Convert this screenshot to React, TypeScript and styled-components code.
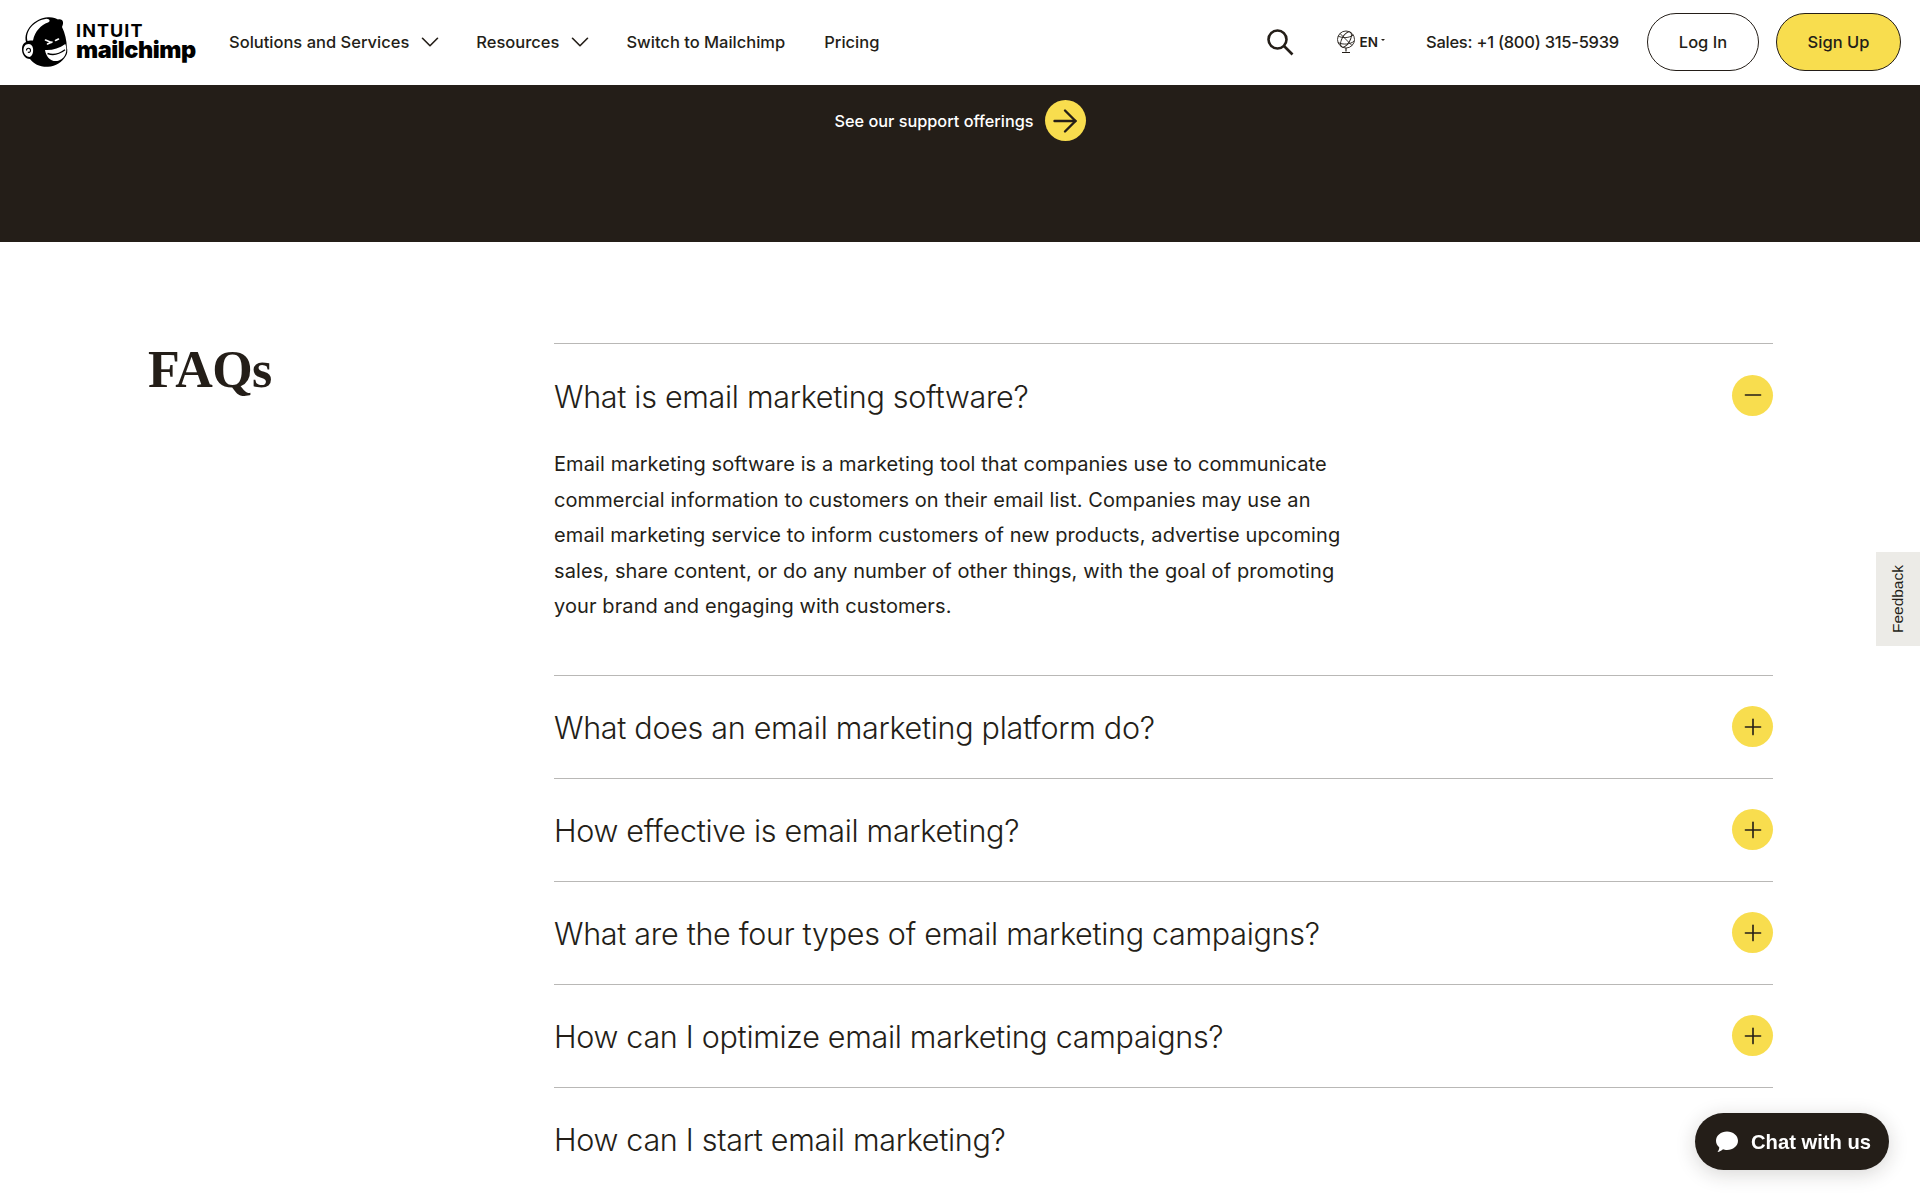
import React from 'react';
import styled, { createGlobalStyle } from 'styled-components';
import { ChevronDown, ArrowRight, Plus, Minus } from 'lucide-react';

const Global = createGlobalStyle`
  html, body { margin: 0; padding: 0; background: #fff; }
  body { font-family: Inter, "Liberation Sans", sans-serif; color: #241e18; overflow: hidden; }
  * { box-sizing: border-box; }
`;

const Page = styled.div`
  height: 1200px;
  overflow: hidden;
  position: relative;
`;

const Header = styled.header`
  height: 85px;
  display: flex;
  align-items: center;
  padding: 0 19px 2px 22px;
  background: #fff;
`;

const LogoLink = styled.a`
  display: flex;
  align-items: center;
  gap: 8px;
  width: 207px;
  flex: none;
`;

const Wordmark = styled.div`
  display: flex;
  flex-direction: column;
  color: #000;
`;

const IntuitMark = styled.span`
  font: 700 18px/16px Inter, sans-serif;
  letter-spacing: 1.1px;
`;

const MailchimpMark = styled.span`
  font: 900 23.5px/21px Inter, sans-serif;
  letter-spacing: -0.45px;
`;

const Nav = styled.nav`
  display: flex;
  align-items: center;
  gap: 39px;
  font: 500 16.5px/24px Inter, sans-serif;
`;

const NavItem = styled.a`
  display: flex;
  align-items: center;
  white-space: nowrap;
`;

const NavChevron = styled(ChevronDown)`
  margin: 0 -7.5px 0 5.5px;
`;

const Tools = styled.div`
  margin-left: auto;
  display: flex;
  align-items: center;
`;

const SearchGlyph = styled.svg`
  margin-right: 42px;
`;

const Lang = styled.div`
  display: flex;
  align-items: center;
  gap: 4px;
  font: 600 13.5px/16px Inter, sans-serif;
  margin-right: 41px;
`;

const Caret = styled.span`
  width: 0;
  height: 0;
  margin: -3px 0 0 -1px;
  border-left: 2px solid transparent;
  border-right: 2px solid transparent;
  border-top: 2px solid #241e18;
`;

const Sales = styled.span`
  font: 500 16.5px/24px Inter, sans-serif;
  letter-spacing: -0.25px;
  margin-right: 28px;
  white-space: nowrap;
`;

const Pill = styled.a<{ $primary?: boolean }>`
  height: 58px;
  width: ${p => (p.$primary ? '125px' : '112px')};
  margin-left: ${p => (p.$primary ? '17px' : '0')};
  border: 1.6px solid #241e18;
  border-radius: 29px;
  background: ${p => (p.$primary ? '#f8dd4e' : '#fff')};
  display: flex;
  align-items: center;
  justify-content: center;
  font: 500 16.5px/24px Inter, sans-serif;
`;

const Band = styled.section`
  height: 157px;
  background: #241e18;
  display: flex;
  justify-content: center;
  align-items: flex-start;
  padding: 15px 0 0 0;
`;

const BandLink = styled.a`
  display: flex;
  align-items: center;
  gap: 11px;
  color: #fff;
  font: 500 16.3px/24px Inter, sans-serif;
`;

const Circle = styled.span<{ $size: number }>`
  width: ${p => p.$size}px;
  height: ${p => p.$size}px;
  border-radius: 50%;
  background: #f8dd4e;
  color: #241e18;
  display: flex;
  align-items: center;
  justify-content: center;
  flex: none;
`;

const FaqSection = styled.section`
  display: grid;
  grid-template-columns: 406px 1219px;
  padding: 101px 0 0 148px;
`;

const FaqTitle = styled.h2`
  margin: -1px 0 0;
  font: 700 52px/56px "Liberation Serif", serif;
  letter-spacing: -0.6px;
  color: #241e18;
`;

const List = styled.div`
  display: flex;
  flex-direction: column;
`;

const Item = styled.div`
  border-top: 1px solid #b9b8b6;
`;

const Question = styled.div`
  height: 102px;
  display: flex;
  align-items: center;
  justify-content: space-between;
`;

const QuestionText = styled.h3`
  margin: 0;
  padding-top: 3px;
  font: 300 30.5px/40px Inter, sans-serif;
  letter-spacing: -0.3px;
  color: #241e18;
`;

const Answer = styled.p`
  margin: 0;
  padding: 1px 0 50px;
  max-width: 800px;
  font: 400 20px/35.5px Inter, sans-serif;
  letter-spacing: 0.1px;
  color: #241e18;
`;

const Feedback = styled.a`
  position: fixed;
  right: 0;
  top: 552px;
  width: 44px;
  height: 94px;
  background: #ecebe7;
  display: flex;
  align-items: center;
  justify-content: center;
`;

const FeedbackLabel = styled.span`
  writing-mode: vertical-rl;
  transform: rotate(180deg);
  font: 400 15.5px/20px "Liberation Sans", sans-serif;
  color: #241e18;
`;

const Chat = styled.a`
  position: fixed;
  left: 1695px;
  top: 1113px;
  width: 194px;
  height: 57px;
  border-radius: 28.5px;
  background: #241e18;
  box-shadow: 0 4px 20px rgba(36, 30, 24, 0.18);
  color: #fff;
  display: flex;
  align-items: center;
  gap: 12px;
  padding-left: 20px;
  font: 700 20.2px/24px "Liberation Sans", sans-serif;
`;

const MonkeyLogo = () => (
  <svg width="46" height="50" viewBox="0 0 46 50" aria-hidden="true">
    <path d="M4 25 C1 13 13 1 26 0.200 C31 0 34 1 36 2.500 C41.500 1.500 42 6 40 10 C43 16 44.800 24 44.800 30 C45.800 34 45.300 37 43.800 39 C40 45 34 49.500 26 49.800 C17 50 12 47 8 42 C3 42 0 37 0 32.500 C0 28 1.500 26 4 25 Z" fill="#000" />
    <path d="M5.500 24 C3 14 12 3.500 24.500 1.800 C28 2 28.500 4.500 26 5.500 C19 8 13 14 11 23.500 C9 23.500 7 23.500 5.500 24 Z" fill="#fff" />
    <path d="M6.500 27 C3 27 1.500 30 1.500 33 C1.500 37 4.500 40 7.500 40 C10.500 39 11.500 35 11 31.500 C10.500 28.500 9 27 6.500 27 Z" fill="#fff" />
    <path d="M4.500 33.500 C4.500 30.500 8.500 30.500 8.500 33.500 C8.500 35.500 6.500 36 6 34.800" fill="none" stroke="#000" strokeWidth="1.1" />
    <path d="M23 33 C30 33.500 37 31.500 43.300 27 C45.800 33 44 41 37 43.500 C30 46 24 40.500 23 33 Z" fill="#fff" />
    <path d="M25.500 36.500 C31 38.500 37.500 37 43 32.800" fill="none" stroke="#000" strokeWidth="1.4" />
    <path d="M23.500 23 L29.500 25.500 M25.500 27 L30 25 M33.500 23.500 L36.500 22" fill="none" stroke="#fff" strokeWidth="1.6" strokeLinecap="round" />
  </svg>
);

const Globe = () => (
  <svg width="20" height="24" viewBox="0 0 20 24" fill="none" stroke="#241e18" strokeWidth="0.9" aria-hidden="true">
    <circle cx="10" cy="9.500" r="8.500" />
    <ellipse cx="10" cy="9.500" rx="4" ry="8.500" transform="rotate(30 10 9.500)" />
    <path d="M2 6 C7 8.500 13 8 17.500 5 M2 12.500 C7 15 14 14.500 18.500 11 M4 3.500 L16 15.500" />
    <path d="M10 18 V21.500 M6 22.500 H14" strokeWidth="1.2" />
  </svg>
);

const ChatBubble = () => (
  <svg width="24" height="24" viewBox="0 0 24 24" aria-hidden="true">
    <path d="M12 1.500 C18 1.500 23 5.500 23 10.800 C23 16 18 20 12 20 C10.500 20 9 19.800 8 19.300 C6.500 20.800 4.500 21.800 2.500 22 C3.800 20.500 4.300 18.800 4.200 17.300 C2 15.600 1 13.300 1 10.800 C1 5.500 6 1.500 12 1.500 Z" fill="#fff" />
  </svg>
);

const faqs = [
  'What does an email marketing platform do?',
  'How effective is email marketing?',
  'What are the four types of email marketing campaigns?',
  'How can I optimize email marketing campaigns?',
  'How can I start email marketing?',
];

export default function App() {
  return (
    <Page>
      <Global />
      <Header>
        <LogoLink>
          <MonkeyLogo />
          <Wordmark>
            <IntuitMark>INTUIT</IntuitMark>
            <MailchimpMark>mailchimp</MailchimpMark>
          </Wordmark>
        </LogoLink>
        <Nav>
          <NavItem>Solutions and Services <NavChevron size={30} strokeWidth={1.3} /></NavItem>
          <NavItem>Resources <NavChevron size={30} strokeWidth={1.3} /></NavItem>
          <NavItem>Switch to Mailchimp</NavItem>
          <NavItem>Pricing</NavItem>
        </Nav>
        <Tools>
          <SearchGlyph width="28" height="28" viewBox="0 0 28 28" fill="none" stroke="#241e18" strokeWidth="2.6" aria-hidden="true">
            <circle cx="11.500" cy="11.500" r="9" />
            <path d="M18 18 L26.500 26.500" />
          </SearchGlyph>
          <Lang><Globe />EN<Caret /></Lang>
          <Sales>Sales: +1 (800) 315-5939</Sales>
          <Pill>Log In</Pill>
          <Pill $primary>Sign Up</Pill>
        </Tools>
      </Header>
      <Band>
        <BandLink>
          See our support offerings
          <Circle $size={41}><ArrowRight size={36} strokeWidth={1.6} /></Circle>
        </BandLink>
      </Band>
      <FaqSection>
        <FaqTitle>FAQs</FaqTitle>
        <List>
          <Item>
            <Question>
              <QuestionText>What is email marketing software?</QuestionText>
              <Circle $size={41}><Minus size={26} strokeWidth={1.5} /></Circle>
            </Question>
            <Answer>
              Email marketing software is a marketing tool that companies use to communicate commercial information to customers on their email list. Companies may use an email marketing service to inform customers of new products, advertise upcoming sales, share content, or do any number of other things, with the goal of promoting your brand and engaging with customers.
            </Answer>
          </Item>
          {faqs.map(q => (
            <Item key={q}>
              <Question>
                <QuestionText>{q}</QuestionText>
                <Circle $size={41}><Plus size={26} strokeWidth={1.5} /></Circle>
              </Question>
            </Item>
          ))}
        </List>
      </FaqSection>
      <Feedback><FeedbackLabel>Feedback</FeedbackLabel></Feedback>
      <Chat><ChatBubble />Chat with us</Chat>
    </Page>
  );
}
